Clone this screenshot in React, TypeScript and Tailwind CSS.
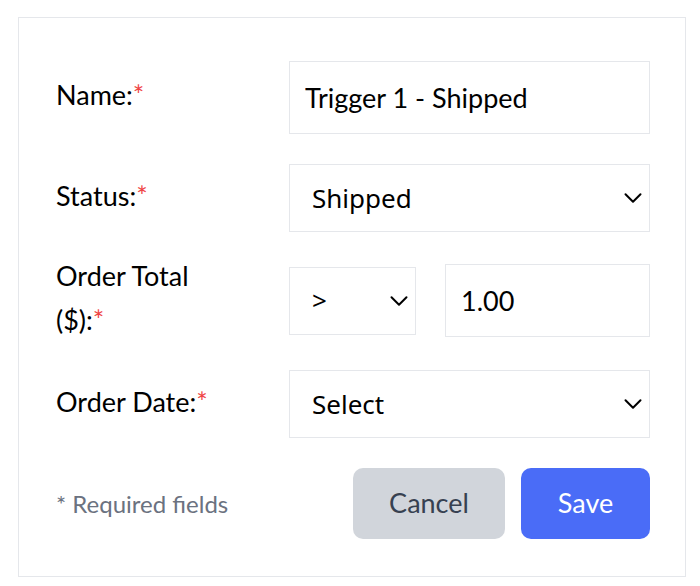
import { ChevronDown } from "lucide-react";

function Label({ lines }: { lines: string[] }) {
	const last = lines[lines.length - 1];
	return (
		<label className="mb-[5px] block text-[27px] leading-[44px] text-black">
			{lines.slice(0, -1).map((line) => (
				<span key={line} className="block">
					{line}
				</span>
			))}
			<span className="block">
				{last}
				<span className="text-[#ef4444]">*</span>
			</span>
		</label>
	);
}

function Select({ value, className }: { value: string; className?: string }) {
	return (
		<div className={`relative h-[68px] ${className ?? ""}`}>
			<select
				defaultValue={value}
				className="h-full w-full appearance-none border border-[#e5e7eb] bg-white pl-[22px] pr-10 font-['Noto_Sans',sans-serif] text-[26px] text-black outline-none"
			>
				<option>{value}</option>
			</select>
			<ChevronDown
				className="pointer-events-none absolute top-1/2 right-[2px] size-[30px] -translate-y-1/2 text-black"
				strokeWidth={1.6}
			/>
		</div>
	);
}

export default function App() {
	return (
		<div className="bg-white pt-[17px] pl-[18px] font-['Lato',sans-serif]">
			<div className="flex h-[560px] w-[668px] flex-col border border-[#e5e7eb] pr-[35px] pl-[37px] pt-[43px]">
				<div className="grid grid-cols-[233px_minmax(0,1fr)] grid-rows-[73px] items-center">
					<Label lines={["Name:"]} />
					<input
						defaultValue="Trigger 1 - Shipped"
						className="h-[73px] w-full border border-[#e5e7eb] px-[15px] text-[27px] text-black outline-none"
					/>
				</div>

				<div className="mt-[30px] grid grid-cols-[233px_minmax(0,1fr)] grid-rows-[68px] items-center">
					<Label lines={["Status:"]} />
					<Select value="Shipped" />
				</div>

				<div className="mt-[32px] grid grid-cols-[233px_minmax(0,1fr)] grid-rows-[73px] items-center">
					<Label lines={["Order Total", "($):"]} />
					<div className="flex items-center gap-[29px]">
						<Select value=">" className="w-[127px] shrink-0" />
						<input
							defaultValue="1.00"
							className="h-[73px] w-0 min-w-0 flex-1 border border-[#e5e7eb] px-[15px] text-[27px] text-black outline-none"
						/>
					</div>
				</div>

				<div className="mt-[33px] grid grid-cols-[233px_minmax(0,1fr)] grid-rows-[68px] items-center">
					<Label lines={["Order Date:"]} />
					<Select value="Select" />
				</div>

				<div className="mt-[30px] flex items-center justify-between">
					<p className="text-[24px] text-[#6b7280]">* Required fields</p>
					<div className="flex gap-4">
						<button className="h-[71px] w-[152px] rounded-[10px] bg-[#d1d5db] text-[27px] text-[#374151]">
							Cancel
						</button>
						<button className="h-[71px] w-[129px] rounded-[10px] bg-[#4a6cf7] text-[27px] text-white">
							Save
						</button>
					</div>
				</div>
			</div>
		</div>
	);
}
